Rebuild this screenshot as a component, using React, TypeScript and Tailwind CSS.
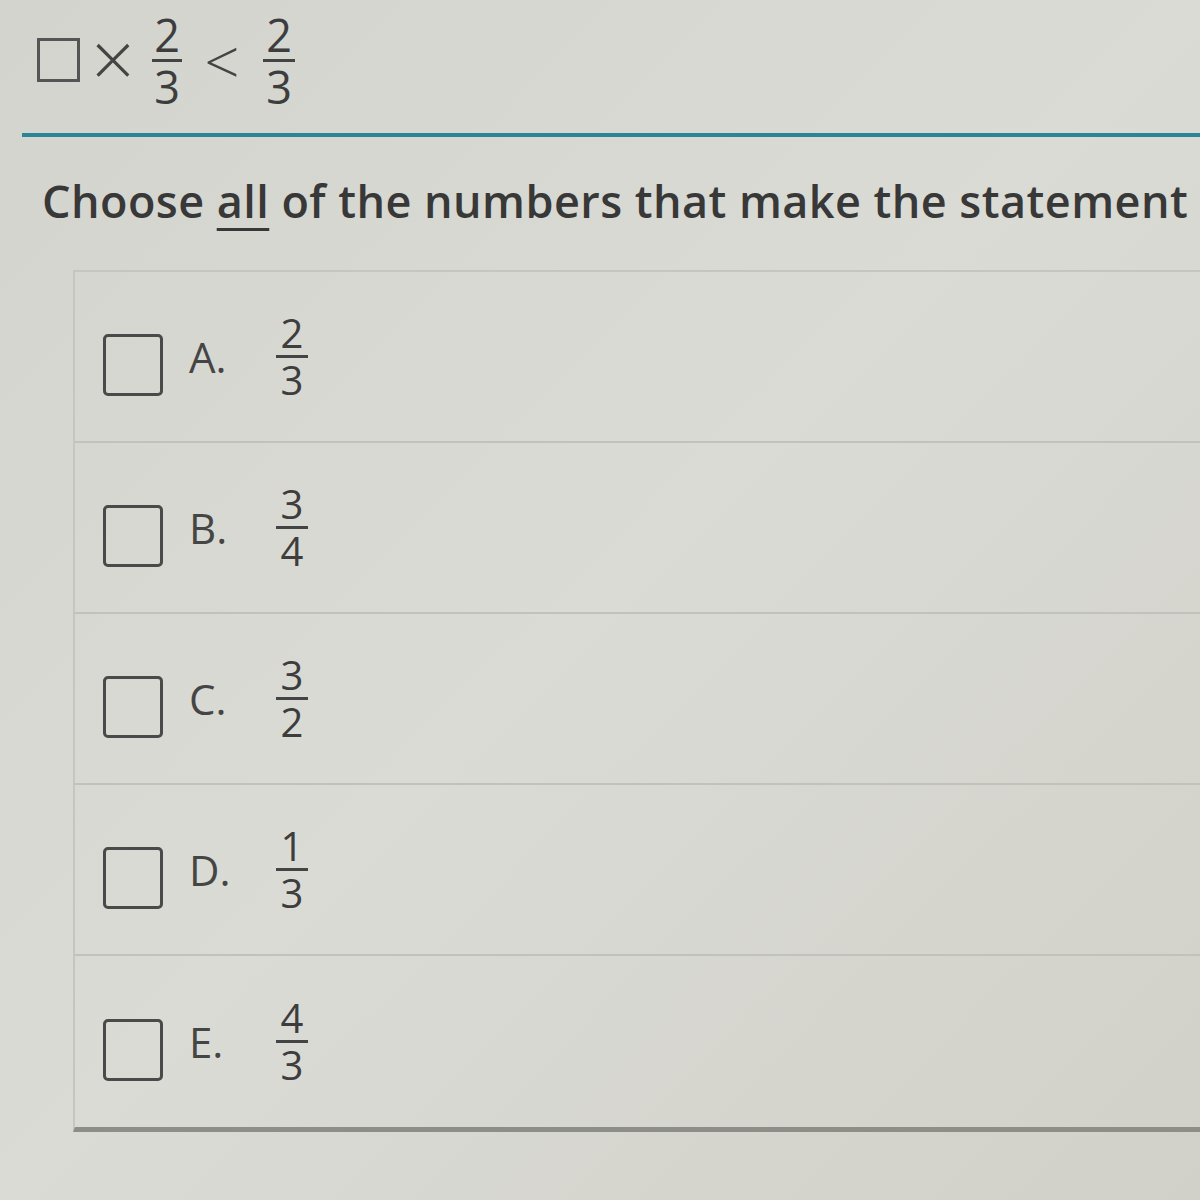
import React from "react";

function Frac({ n, d, size, barW }: { n: string; d: string; size: "lg" | "md"; barW: string }) {
  const txt = size === "lg" ? "text-[45px]" : "text-[40px]";
  return (
    <div className={`flex flex-col items-center ${txt} leading-none text-[#3d3d3d]`}>
      <span className="block">{n}</span>
      <div className={`h-[3px] ${barW} bg-[#444] my-[2px]`} />
      <span className="block">{d}</span>
    </div>
  );
}

const options = [
  { l: "A.", n: "2", d: "3" },
  { l: "B.", n: "3", d: "4" },
  { l: "C.", n: "3", d: "2" },
  { l: "D.", n: "1", d: "3" },
  { l: "E.", n: "4", d: "3" },
];

export default function App() {
  return (
    <div
      className="w-[1200px] h-[1200px] overflow-hidden bg-gradient-to-br from-[#d3d4cd] via-[#dbdbd5] to-[#d1d1ca] text-[#3a3a3a]"
      style={{ fontFamily: '"Open Sans", "Liberation Sans", sans-serif' }}
    >
      {/* equation */}
      <div className="flex items-center h-[120px] pl-[37px]">
        <div className="w-[43px] h-[44px] border-[3px] border-[#555]" />
        <div className="w-[66px] flex justify-center">
          <span className="text-[76px] leading-none font-light text-[#444] -mt-[4px]">×</span>
        </div>
        <div className="w-[42px] flex justify-center">
          <Frac n="2" d="3" size="lg" barW="w-[30px]" />
        </div>
        <div className="w-[68px] flex justify-center">
          <span className="text-[62px] leading-none font-light text-[#444] mt-[2px]">&lt;</span>
        </div>
        <div className="w-[46px] flex justify-center">
          <Frac n="2" d="3" size="lg" barW="w-[32px]" />
        </div>
      </div>
      {/* teal rule */}
      <div className="ml-[22px] mt-[13px] h-[4px] bg-[#2b8597]" />
      {/* prompt */}
      <div className="pl-[42px] mt-[41px] text-[45px] leading-none font-semibold text-[#383838] whitespace-nowrap tracking-[0.45px]">
        Choose <span className="underline decoration-[3px] underline-offset-[10px]">all</span> of the numbers that make the statement
      </div>
      {/* answers panel */}
      <div className="ml-[73px] mt-[47px] border-t-2 border-l-2 border-[#c6c6c0] border-b-[5px] border-b-[#8e8e88]">
        {options.map((o, i) => (
          <div
            key={o.l}
            className={`h-[171px] flex items-center pl-[28px] ${i < options.length - 1 ? "border-b-2 border-[#c2c2bc]" : ""}`}
          >
            <div className="w-[60px] h-[62px] mt-[16px] border-[3px] border-[#4a4a4a] rounded-[5px]" />
            <div className="ml-[26px] w-[83px] text-[42px] leading-none text-[#454545]">{o.l}</div>
            <div className="w-[40px] flex justify-center">
              <Frac n={o.n} d={o.d} size="md" barW="w-[32px]" />
            </div>
          </div>
        ))}
      </div>
    </div>
  );
}
